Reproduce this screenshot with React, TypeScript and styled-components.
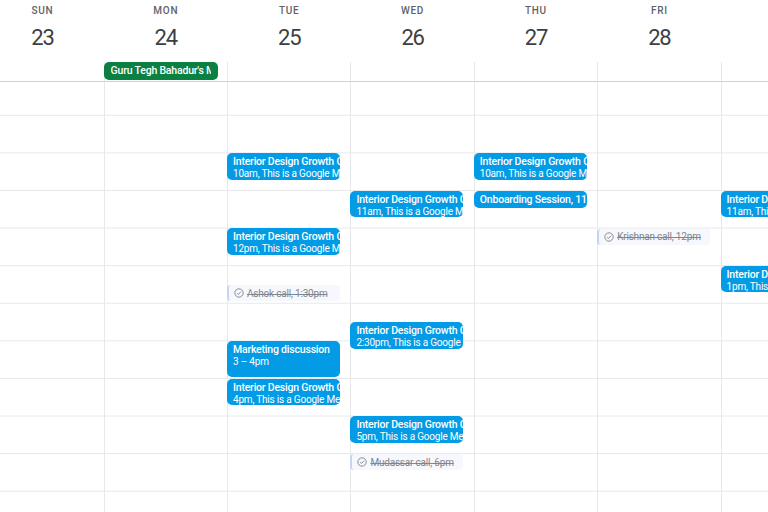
import React from "react";
import styled, { createGlobalStyle } from "styled-components";

const Global = createGlobalStyle`
  html, body { margin: 0; padding: 0; background: #fff; }
  body { font-family: "Roboto", "Liberation Sans", sans-serif; width: 768px; height: 512px; overflow: hidden; }
`;

const COL = 123.4;
const ROW = 37.6;
const BODY_HOUR_ZERO = 8.114; // hour whose line falls exactly on the top of the body

const Page = styled.div`
  width: 768px;
  height: 512px;
  overflow: hidden;
  background: #fff;
`;
const Week = styled.div`
  display: flex;
  margin-left: -19.8px;
  width: ${COL * 7}px;
`;
const Day = styled.section`
  flex: 0 0 ${COL}px;
  display: flex;
  flex-direction: column;
`;
const DayHead = styled.header`
  height: 62px;
  box-sizing: border-box;
  padding-left: 1px;
  display: flex;
  flex-direction: column;
  align-items: center;
`;
const DayName = styled.div`
  margin-top: 5px;
  font-size: 10px;
  line-height: 12px;
  font-weight: 500;
  letter-spacing: 0.7px;
  color: #5f6368;
`;
const DayNum = styled.div`
  margin-top: 8px;
  font-size: 22px;
  line-height: 26px;
  letter-spacing: -1.2px;
  color: #3c4043;
`;
const AllDay = styled.div`
  height: 20px;
  box-sizing: border-box;
  border-left: 1px solid #e6e8ea;
  border-bottom: 1px solid #cfd1d4;
  position: relative;
`;
const Holiday = styled.div`
  position: absolute;
  left: -1px;
  top: 0;
  width: 114px;
  height: 18px;
  box-sizing: border-box;
  padding: 0 7px;
  border-radius: 5px;
  background: #0b8043;
  color: #fff;
  font-size: 10.5px;
  letter-spacing: -0.2px;
  font-weight: 500;
  line-height: 17px;
  z-index: 1;
`;
const Clip = styled.div`
  overflow: hidden;
  white-space: nowrap;
`;
const Body = styled.div`
  position: relative;
  height: 430px;
  box-sizing: border-box;
  border-left: 1px solid #e6e8ea;
  background-image: linear-gradient(to bottom, #e6e8ea 1px, transparent 1px);
  background-size: 100% ${ROW}px;
  background-position: 0 32.8px;
`;
const Event = styled.div`
  position: absolute;
  left: -1px;
  width: 113px;
  box-sizing: border-box;
  padding: 3px 0 0 6px;
  border-radius: 5px;
  background: #039be5;
  color: #fff;
  font-size: 10px;
  letter-spacing: -0.2px;
  line-height: 12px;
  overflow: hidden;
  white-space: nowrap;
`;
const Title = styled.div`
  font-size: 10.5px;
  font-weight: 500;
`;
const Task = styled.div`
  position: absolute;
  left: -1px;
  width: 113px;
  height: 16px;
  box-sizing: border-box;
  display: flex;
  align-items: center;
  gap: 3px;
  padding-left: 5px;
  border-radius: 4px;
  border-left: 2px solid #c6d5f6;
  background: #f6f8fd;
  color: #80868b;
  font-size: 10px;
  letter-spacing: -0.2px;
  text-decoration: line-through;
  white-space: nowrap;
`;

const days: [string, number][] = [
  ["SUN", 23], ["MON", 24], ["TUE", 25], ["WED", 26], ["THU", 27], ["FRI", 28], ["SAT", 29],
];

const IGD = "Interior Design Growth Call";
const meet = "This is a Google Meet";

type Item =
  | { kind: "event"; day: number; hour: number; title: string; sub?: string; hours?: number }
  | { kind: "task"; day: number; hour: number; title: string };

const items: Item[] = [
  { kind: "event", day: 2, hour: 10, title: IGD, sub: `10am, ${meet}` },
  { kind: "event", day: 2, hour: 12, title: IGD, sub: `12pm, ${meet}` },
  { kind: "task", day: 2, hour: 13.5, title: "Ashok call, 1:30pm" },
  { kind: "event", day: 2, hour: 15, title: "Marketing discussion", sub: "3 – 4pm", hours: 0.96 },
  { kind: "event", day: 2, hour: 16, title: IGD, sub: `4pm, ${meet}` },
  { kind: "event", day: 3, hour: 11, title: IGD, sub: `11am, ${meet}` },
  { kind: "event", day: 3, hour: 14.5, title: IGD, sub: `2:30pm, ${meet}` },
  { kind: "event", day: 3, hour: 17, title: IGD, sub: `5pm, ${meet}` },
  { kind: "task", day: 3, hour: 18, title: "Mudassar call, 6pm" },
  { kind: "event", day: 4, hour: 10, title: IGD, sub: `10am, ${meet}` },
  { kind: "event", day: 4, hour: 11, title: "Onboarding Session, 11am", hours: 0.47 },
  { kind: "task", day: 5, hour: 12, title: "Krishnan call, 12pm" },
  { kind: "event", day: 6, hour: 11, title: IGD, sub: `11am, ${meet}` },
  { kind: "event", day: 6, hour: 13, title: IGD, sub: `1pm, ${meet}` },
];

const CheckIcon = () => (
  <svg width="10" height="10" viewBox="0 0 24 24" fill="none" stroke="#80868b" strokeWidth="2.2" style={{ flex: "none" }}>
    <circle cx="12" cy="12" r="10" />
    <path d="M7.5 12.5l3 3 6-6.5" />
  </svg>
);

const topOf = (hour: number) => (hour - BODY_HOUR_ZERO) * ROW;

export default function App() {
  return (
    <Page>
      <Global />
      <Week>
        {days.map(([name, num], d) => (
          <Day key={name}>
            <DayHead>
              <DayName>{name}</DayName>
              <DayNum>{num}</DayNum>
            </DayHead>
            <AllDay>
              {d === 1 && (
                <Holiday>
                  <Clip>Guru Tegh Bahadur's Martyrdom Day</Clip>
                </Holiday>
              )}
            </AllDay>
            <Body>
              {items.filter((i) => i.day === d).map((i) =>
                i.kind === "task" ? (
                  <Task key={i.title} style={{ top: topOf(i.hour) + 0.6 }}>
                    <CheckIcon />
                    {i.title}
                  </Task>
                ) : (
                  <Event key={i.hour} style={{ top: topOf(i.hour), height: (i.hours ?? 0.71) * ROW }}>
                    <Title>{i.title}</Title>
                    {i.sub && <div>{i.sub}</div>}
                  </Event>
                )
              )}
            </Body>
          </Day>
        ))}
      </Week>
    </Page>
  );
}
